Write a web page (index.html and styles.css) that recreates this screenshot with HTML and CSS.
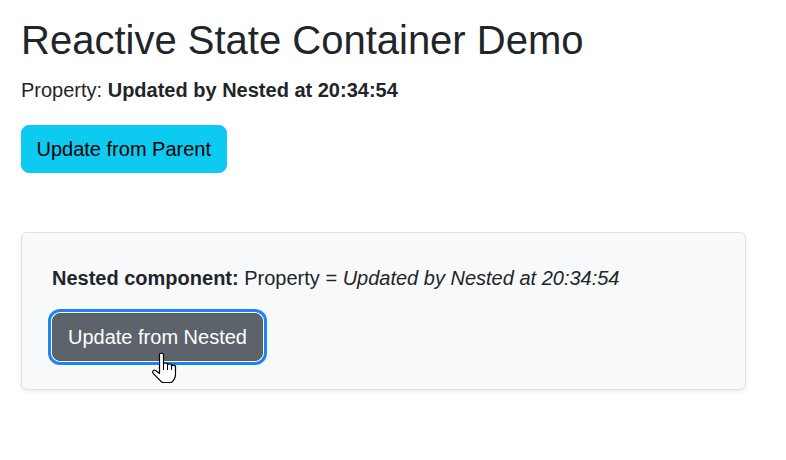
FILE: index.html
```html
<!DOCTYPE html>
<html lang="en">
<head>
<meta charset="utf-8">
<title>Reactive State Container Demo</title>
<link rel="stylesheet" href="styles.css">
</head>
<body>
<div class="page">
  <h1 class="title">Reactive State Container Demo</h1>
  <p class="lead">Property: <strong>Updated by Nested at 20:34:54</strong></p>
  <button class="btn btn-info" type="button">Update from Parent</button>
  <div class="card">
    <p class="nested-text"><strong>Nested component:</strong> Property = <em>Updated by Nested at 20:34:54</em></p>
    <div class="btn-wrap">
      <button class="btn btn-secondary is-focused" type="button">Update from Nested</button>
      <svg class="cursor" width="27" height="32" viewBox="0 0 27 32" aria-hidden="true">
        <path d="M8.5,2.6 C8.5,0.8 12.5,0.8 12.5,2.6 L12.5,12.2 C12.5,10.4 16.5,10.4 16.5,12.2 L16.5,13.2 C16.5,11.4 20.5,11.4 20.5,13.2 L20.5,14.4 C20.5,12.6 24.5,12.6 24.5,14.4 L24.5,22.5 C24.5,26 22.5,28.6 20.5,30.5 L11.2,30.5 C9,28.4 5.2,24.6 2.2,21.4 C0.6,19.7 2.6,17.2 4.6,18.6 L8.5,21.6 Z" fill="#fff" stroke="#000" stroke-width="1.2" stroke-linejoin="round"/>
        <path d="M12.5,12.2 V18 M16.5,13.2 V18 M20.5,14.4 V18" fill="none" stroke="#000" stroke-width="1"/>
      </svg>
    </div>
  </div>
</div>
</body>
</html>
```
FILE: styles.css
```css
html, body {
  margin: 0;
  padding: 0;
  background: #fff;
}

body {
  font-family: "Liberation Sans", Arial, sans-serif;
  color: #212529;
  font-size: 16px;
  line-height: 1.5;
}

.page {
  padding: 16px 21px;
}

.title {
  margin: 0 0 11px;
  font-size: 40px;
  font-weight: 500;
  line-height: 1.2;
}

.lead {
  margin: 0 0 20px;
  font-size: 20px;
  line-height: 30px;
}

.lead strong,
.nested-text strong {
  font-weight: 700;
}

.btn {
  display: inline-block;
  font-family: inherit;
  font-size: 20px;
  line-height: 30px;
  padding: 8px 16px;
  border: 1px solid transparent;
  border-radius: 8px;
  cursor: pointer;
}

.btn-info {
  background: #0dcaf0;
  border-color: #0dcaf0;
  color: #000;
  padding: 8px 14.5px;
}

.card {
  margin-top: 59px;
  width: 725px;
  box-sizing: border-box;
  background: #f8f9fa;
  border: 1px solid #dfe0e1;
  border-radius: 6px;
  box-shadow: 0 2px 4px rgba(0, 0, 0, 0.075);
  padding: 30px 29px 28px 29.5px;
}

.nested-text {
  margin: 0 0 20px;
  font-size: 20px;
  line-height: 30px;
  padding-left: 0.5px;
}

.btn-wrap {
  position: relative;
  display: inline-block;
}

.btn-secondary {
  background: #5c636a;
  border-color: #565e64;
  color: #fff;
  padding: 8px 15.5px;
}

.is-focused {
  box-shadow: 0 0 0 1px #ffffff, 0 0 0 4px #1e84f4;
}

.cursor {
  position: absolute;
  left: 99px;
  top: 39px;
}
```
